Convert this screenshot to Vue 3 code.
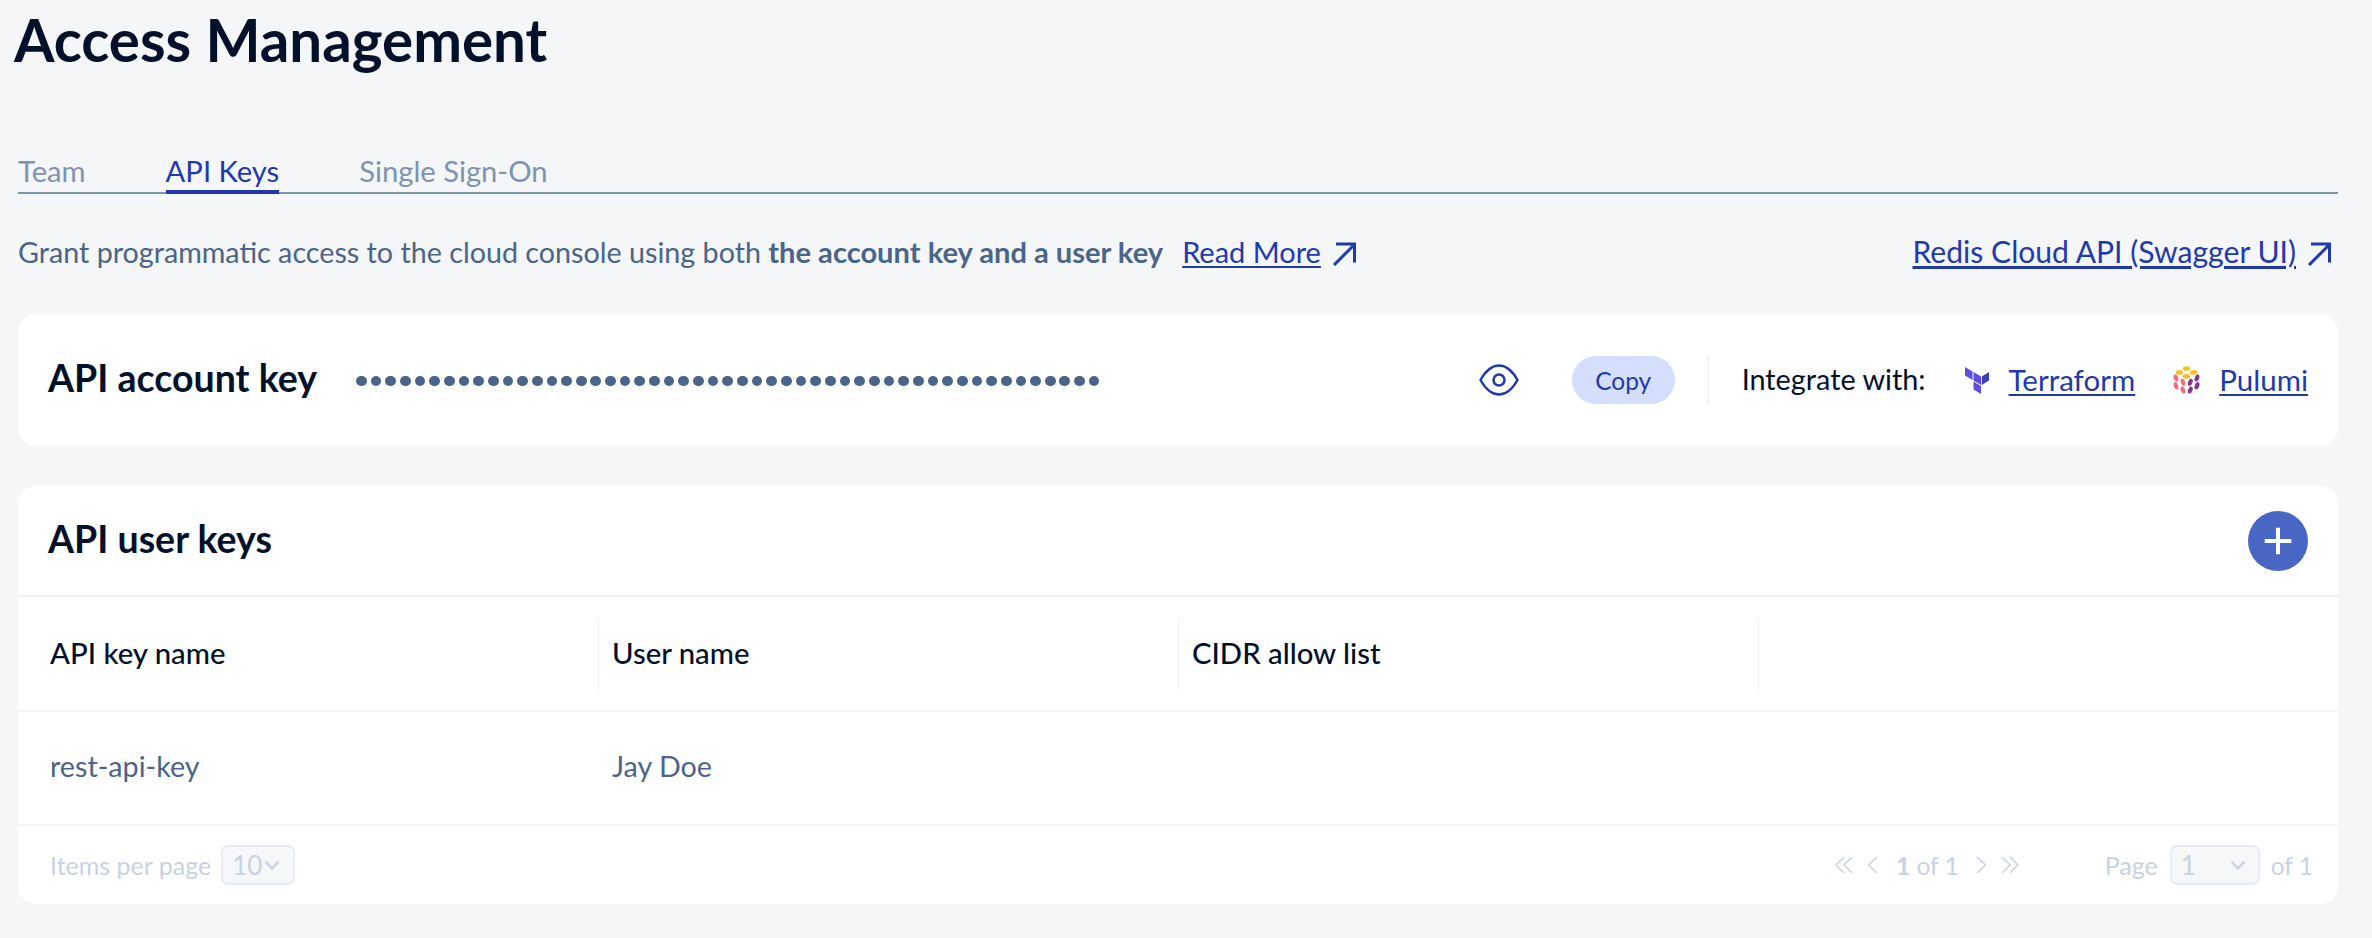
<script setup>
const dots = 51
</script>

<template>
  <main class="page">
    <h1 class="title">Access Management</h1>
    <nav class="tabs">
      <a class="tab">Team</a>
      <a class="tab active">API Keys</a>
      <a class="tab">Single Sign-On</a>
    </nav>
    <div class="intro">
      <p class="desc">Grant programmatic access to the cloud console using both <b>the account key and a user key</b></p>
      <a class="link more">Read More</a>
      <svg class="arrow" viewBox="0 0 24 24"><path d="M2 23 22 3M4 2h18.500v18.500" /></svg>
      <span class="spacer"></span>
      <a class="link swagger">Redis Cloud API (Swagger UI)</a>
      <svg class="arrow end" viewBox="0 0 24 24"><path d="M2 23 22 3M4 2h18.500v18.500" /></svg>
    </div>

    <section class="card account">
      <h2 class="card-title">API account key</h2>
      <div class="dots"><i v-for="n in dots" :key="n"></i></div>
      <span class="spacer"></span>
      <svg class="eye" viewBox="0 0 40 32"><path d="M1.500 16C6 8 12 1.500 20 1.500S34 8 38.500 16C34 24 28 30.500 20 30.500S6 24 1.500 16Z" /><circle cx="20" cy="16" r="5.500" /></svg>
      <button class="copy">Copy</button>
      <span class="vline"></span>
      <span class="integrate">Integrate with:</span>
      <svg class="logo tf" viewBox="0 0 24 27">
        <path fill="#5c4ee5" d="M0 0 7.500 4.500V13L0 8.500Z" />
        <path fill="#4040b2" d="M16.800 9.500 24 5V13.500L16.800 18Z" />
        <path fill="#5c4ee5" d="M8.500 5 16 9.500V18L8.500 13.500Z" />
        <path fill="#5c4ee5" d="M8.500 14.500 16 19V27L8.500 22.500Z" />
      </svg>
      <a class="link int">Terraform</a>
      <svg class="logo pu" viewBox="0 0 28 28">
        <ellipse fill="#f7bf2a" cx="13.500" cy="2.500" rx="3.700" ry="2.300" />
        <ellipse fill="#f7bf2a" cx="6.300" cy="6.400" rx="3.700" ry="2.300" />
        <ellipse fill="#f7bf2a" cx="20.700" cy="6.400" rx="3.700" ry="2.300" />
        <ellipse fill="#f7bf2a" cx="13.500" cy="10.400" rx="3.700" ry="2.300" />
        <ellipse fill="#f26e7e" cx="3" cy="12" rx="2.200" ry="3.700" transform="rotate(-20 3 12)" />
        <ellipse fill="#f26e7e" cx="10" cy="16.300" rx="2.200" ry="3.700" transform="rotate(-20 10 16.300)" />
        <ellipse fill="#f26e7e" cx="3" cy="19.700" rx="2.200" ry="3.700" transform="rotate(-20 3 19.700)" />
        <ellipse fill="#f26e7e" cx="10" cy="24" rx="2.200" ry="3.700" transform="rotate(-20 10 24)" />
        <ellipse fill="#8a3391" cx="24" cy="12" rx="2.200" ry="3.700" transform="rotate(20 24 12)" />
        <ellipse fill="#8a3391" cx="17.300" cy="16.300" rx="2.200" ry="3.700" transform="rotate(20 17.300 16.300)" />
        <ellipse fill="#8a3391" cx="24" cy="19.700" rx="2.200" ry="3.700" transform="rotate(20 24 19.700)" />
        <ellipse fill="#8a3391" cx="17.300" cy="24" rx="2.200" ry="3.700" transform="rotate(20 17.300 24)" />
      </svg>
      <a class="link int">Pulumi</a>
    </section>

    <section class="card users">
      <header class="users-head">
        <h2 class="card-title">API user keys</h2>
        <button class="add"><svg viewBox="0 0 24 24"><path d="M12 2v20M2 12h20" /></svg></button>
      </header>
      <div class="row head">
        <div class="cell">API key name</div>
        <div class="cell">User name</div>
        <div class="cell">CIDR allow list</div>
        <div class="cell"></div>
      </div>
      <div class="row body">
        <div class="cell">rest-api-key</div>
        <div class="cell">Jay Doe</div>
        <div class="cell"></div>
        <div class="cell"></div>
      </div>
      <footer class="pager">
        <span>Items per page</span>
        <span class="select small"><em>10</em><svg class="chev" viewBox="0 0 16 10"><path d="M1.500 1.500 8 8.500 14.500 1.500" /></svg></span>
        <span class="spacer"></span>
        <svg class="pg" viewBox="0 0 18 18"><path d="M9 1 1 9l8 8M17 1 9 9l8 8" /></svg>
        <svg class="pg one" viewBox="0 0 11 18"><path d="M10 1 1.500 9l8.500 8" /></svg>
        <span class="count"><b>1</b> of 1</span>
        <svg class="pg one" viewBox="0 0 11 18"><path d="M1 1l8.500 8L1 17" /></svg>
        <svg class="pg last" viewBox="0 0 18 18"><path d="m1 1 8 8-8 8M9 1l8 8-8 8" /></svg>
        <span class="page-label">Page</span>
        <span class="select large"><em>1</em><svg class="chev" viewBox="0 0 16 10"><path d="M1.500 1.500 8 8.500 14.500 1.500" /></svg></span>
        <span class="of">of 1</span>
      </footer>
    </section>
  </main>
</template>

<style>
html, body { margin: 0; background: #f4f6f8; }
</style>

<style scoped>
.page {
  width: 2372px;
  height: 938px;
  box-sizing: border-box;
  padding: 0 34px 0 18px;
  overflow: hidden;
  background: #f4f6f8;
  font-family: "Lato", "Open Sans", sans-serif;
  color: #4a6589;
}
.spacer { flex: 1; }
.title {
  margin: 0 0 0 -4px;
  height: 82px;
  line-height: 79px;
  font-size: 58.300px;
  font-weight: 700;
  color: #01112a;
}
.tabs {
  display: flex;
  gap: 80px;
  height: 112px;
  box-sizing: border-box;
  padding-top: 69px;
  border-bottom: 2px solid #7e93b3;
}
.tab {
  position: relative;
  height: 41px;
  font-size: 29.200px;
  line-height: 40px;
  color: #7e93b3;
}
.tab.active { color: #2239ad; }
.tab.active::after {
  content: "";
  position: absolute;
  left: 0;
  right: 0;
  bottom: -2px;
  height: 4px;
  background: #2239ad;
}
.intro {
  display: flex;
  align-items: center;
  box-sizing: border-box;
  height: 120px;
  padding-bottom: 6px;
  font-size: 28.700px;
}
.desc { margin: 0; }
.desc b { font-size: 29.100px; }
.link {
  color: #2239ad;
  text-decoration: underline;
  text-underline-offset: 3px;
  font-size: 29.500px;
}
.more { font-size: 29px; margin-left: 19px; }
.swagger { font-size: 30.100px; }
.arrow {
  width: 24px;
  height: 24px;
  margin: 5px 0 0 11px;
  fill: none;
  stroke: #2239ad;
  stroke-width: 3;
}
.arrow.end { margin-right: 7px; }
.card {
  background: #fff;
  border-radius: 18px;
  box-sizing: border-box;
}
.account {
  display: flex;
  align-items: center;
  height: 132px;
  padding: 0 30px 0;
  font-size: 29px;
}
.card-title {
  margin: 0 0 5px;
  font-size: 37.500px;
  font-weight: 700;
  color: #01112a;
}
.dots {
  display: flex;
  gap: 3.970px;
  margin: 2px 0 0 39px;
}
.dots i {
  width: 10.700px;
  height: 10.700px;
  border-radius: 50%;
  background: #4a6589;
}
.eye {
  width: 40px;
  height: 32px;
  margin-right: -1px;
  fill: none;
  stroke: #2239ad;
  stroke-width: 2.500;
}
.copy {
  width: 103px;
  height: 48px;
  margin-left: 54px;
  border: 0;
  border-radius: 24px;
  background: #d3dffc;
  color: #2239ad;
  font: inherit;
  font-size: 24.500px;
}
.vline {
  width: 1px;
  height: 48px;
  margin: 0 33px;
  background: #e8ebef;
}
.integrate { color: #01112a; font-size: 28.800px; margin-bottom: 2px; }
.int { margin-bottom: 2px; }
.logo { width: 24px; height: 27px; margin-left: 39px; margin-right: 20px; }
.pu { width: 28px; height: 28px; margin-left: 38px; margin-right: 18px; }
.users { margin-top: 40px; height: 418px; }
.users-head {
  display: flex;
  align-items: center;
  justify-content: space-between;
  box-sizing: border-box;
  height: 111px;
  padding: 0 30px;
  border-bottom: 2px solid #eceef2;
}
.add {
  display: flex;
  align-items: center;
  justify-content: center;
  width: 60px;
  height: 60px;
  padding: 0;
  border: 0;
  border-radius: 50%;
  background: #4966c4;
}
.add svg {
  width: 32px;
  height: 32px;
  fill: none;
  stroke: #fff;
  stroke-width: 3;
}
.row {
  display: grid;
  grid-template-columns: 581px 580px 580px 1fr;
  align-items: center;
  box-sizing: border-box;
  border-bottom: 2px solid #f4f5f7;
  font-size: 29px;
}
.head { height: 115px; color: #01112a; font-weight: 500; font-size: 29.300px; }
.body { height: 114px; padding-bottom: 4px; font-size: 28.700px; }
.cell {
  box-sizing: border-box;
  padding-left: 32px;
}
.cell + .cell { padding-left: 13px; }
.head .cell {
  height: 72px;
  line-height: 69px;
  border-right: 1px solid #f0f1f4;
}
.head .cell:last-child { border-right: 0; }
.pager {
  display: flex;
  align-items: center;
  height: 78px;
  padding: 0 25px 0 32px;
  color: #c8d2e2;
  font-size: 25px;
}
.select {
  display: flex;
  align-items: center;
  justify-content: space-between;
  box-sizing: border-box;
  height: 40px;
  margin-left: 10px;
  padding: 0 14px 0 9px;
  border: 2px solid #e8ebf1;
  border-radius: 7px;
  background: #f5f7f8;
  font-size: 26px;
}
.select em { font-style: normal; }
.small { width: 74px; padding-right: 13px; }
.large { width: 90px; padding-right: 12px; margin-left: 12px; }
.chev {
  width: 16px;
  height: 10px;
  fill: none;
  stroke: #c8d2e2;
  stroke-width: 2.500;
}
.pg {
  width: 18px;
  height: 18px;
  margin-right: 14px;
  fill: none;
  stroke: #c8d2e2;
  stroke-width: 1.500;
}
.pg.one { width: 11px; }
.pg.last { margin-right: 0; }
.count { margin: 0 17px 0 4px; font-size: 24.500px; }
.page-label { margin-left: 86px; }
.of { margin-left: 11px; font-size: 24.500px; }
</style>
